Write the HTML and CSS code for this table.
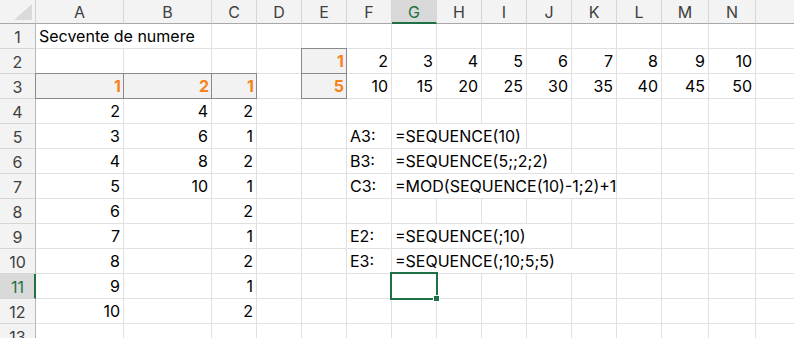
FILE: index.html
```html
<!DOCTYPE html>
<html>
<head>
<meta charset="utf-8">
<link rel="stylesheet" href="styles.css">
</head>
<body>
<div class="sheet">
  <!-- header row: corner + A..O -->
  <div class="corner"><svg class="tri" width="18" height="16" viewBox="0 0 18 16"><polygon points="18,0 18,16 0,16" fill="#dadada"/></svg></div>
  <div class="ch">A</div><div class="ch">B</div><div class="ch">C</div><div class="ch">D</div><div class="ch">E</div><div class="ch">F</div><div class="ch ch-sel">G</div><div class="ch">H</div><div class="ch">I</div><div class="ch">J</div><div class="ch">K</div><div class="ch">L</div><div class="ch">M</div><div class="ch">N</div><div class="ch"></div>

  <!-- row 1: A-B span, C..O (13) -->
  <div class="rh">1</div>
  <div class="c s2 txt">Secvente de numere</div>
  <div class="c"></div><div class="c"></div><div class="c"></div><div class="c"></div><div class="c"></div>
  <div class="c"></div><div class="c"></div><div class="c"></div><div class="c"></div><div class="c"></div>
  <div class="c"></div><div class="c"></div><div class="c"></div>

  <!-- row 2 -->
  <div class="rh">2</div>
  <div class="c"></div><div class="c"></div><div class="c"></div><div class="c"></div>
  <div class="c n spill">1</div>
  <div class="c n">2</div><div class="c n">3</div><div class="c n">4</div><div class="c n">5</div><div class="c n">6</div><div class="c n">7</div><div class="c n">8</div><div class="c n">9</div><div class="c n">10</div><div class="c"></div>

  <!-- row 3 -->
  <div class="rh">3</div>
  <div class="c n spill">1</div><div class="c n spill">2</div><div class="c n spill">1</div><div class="c"></div>
  <div class="c n spill">5</div>
  <div class="c n">10</div><div class="c n">15</div><div class="c n">20</div><div class="c n">25</div><div class="c n">30</div><div class="c n">35</div><div class="c n">40</div><div class="c n">45</div><div class="c n">50</div><div class="c"></div>

  <!-- row 4 -->
  <div class="rh">4</div>
  <div class="c n">2</div><div class="c n">4</div><div class="c n">2</div>
  <div class="c"></div><div class="c"></div><div class="c"></div><div class="c"></div><div class="c"></div><div class="c"></div>
  <div class="c"></div><div class="c"></div><div class="c"></div><div class="c"></div><div class="c"></div><div class="c"></div>

  <!-- row 5: G-I span, then J..O (6) -->
  <div class="rh">5</div>
  <div class="c n">3</div><div class="c n">6</div><div class="c n">1</div><div class="c"></div><div class="c"></div>
  <div class="c txt">A3:</div><div class="c s3 txt">=SEQUENCE(10)</div>
  <div class="c"></div><div class="c"></div><div class="c"></div><div class="c"></div><div class="c"></div><div class="c"></div>

  <!-- row 6: G-J span, then K..O (5) -->
  <div class="rh">6</div>
  <div class="c n">4</div><div class="c n">8</div><div class="c n">2</div><div class="c"></div><div class="c"></div>
  <div class="c txt">B3:</div><div class="c s4 txt">=SEQUENCE(5;;2;2)</div>
  <div class="c"></div><div class="c"></div><div class="c"></div><div class="c"></div><div class="c"></div>

  <!-- row 7: G-K span, then L..O (4) -->
  <div class="rh">7</div>
  <div class="c n">5</div><div class="c n">10</div><div class="c n">1</div><div class="c"></div><div class="c"></div>
  <div class="c txt">C3:</div><div class="c s5 txt">=MOD(SEQUENCE(10)-1;2)+1</div>
  <div class="c"></div><div class="c"></div><div class="c"></div><div class="c"></div>

  <!-- row 8 -->
  <div class="rh">8</div>
  <div class="c n">6</div><div class="c"></div><div class="c n">2</div>
  <div class="c"></div><div class="c"></div><div class="c"></div><div class="c"></div><div class="c"></div><div class="c"></div>
  <div class="c"></div><div class="c"></div><div class="c"></div><div class="c"></div><div class="c"></div><div class="c"></div>

  <!-- row 9: G-J span, then K..O (5) -->
  <div class="rh">9</div>
  <div class="c n">7</div><div class="c"></div><div class="c n">1</div><div class="c"></div><div class="c"></div>
  <div class="c txt">E2:</div><div class="c s4 txt">=SEQUENCE(;10)</div>
  <div class="c"></div><div class="c"></div><div class="c"></div><div class="c"></div><div class="c"></div>

  <!-- row 10: G-K span, then L..O (4) -->
  <div class="rh">10</div>
  <div class="c n">8</div><div class="c"></div><div class="c n">2</div><div class="c"></div><div class="c"></div>
  <div class="c txt">E3:</div><div class="c s5 txt">=SEQUENCE(;10;5;5)</div>
  <div class="c"></div><div class="c"></div><div class="c"></div><div class="c"></div>

  <!-- row 11 -->
  <div class="rh rh-sel">11</div>
  <div class="c n">9</div><div class="c"></div><div class="c n">1</div><div class="c"></div><div class="c"></div><div class="c"></div>
  <div class="c sel"></div>
  <div class="c"></div><div class="c"></div><div class="c"></div><div class="c"></div><div class="c"></div><div class="c"></div><div class="c"></div><div class="c"></div>

  <!-- row 12 -->
  <div class="rh">12</div>
  <div class="c n">10</div><div class="c"></div><div class="c n">2</div>
  <div class="c"></div><div class="c"></div><div class="c"></div><div class="c"></div><div class="c"></div><div class="c"></div>
  <div class="c"></div><div class="c"></div><div class="c"></div><div class="c"></div><div class="c"></div><div class="c"></div>

  <!-- row 13 -->
  <div class="rh">13</div>
  <div class="c"></div><div class="c"></div><div class="c"></div>
  <div class="c"></div><div class="c"></div><div class="c"></div><div class="c"></div><div class="c"></div><div class="c"></div>
  <div class="c"></div><div class="c"></div><div class="c"></div><div class="c"></div><div class="c"></div><div class="c"></div>
</div>
</body>
</html>
```

FILE: styles.css
```css
html, body {
  margin: 0;
  padding: 0;
  background: #ffffff;
  overflow: hidden;
}

.sheet {
  display: grid;
  grid-template-columns: 36px 88px 88px repeat(10, 45px) 47px 47px 80px;
  grid-template-rows: 24px;
  grid-auto-rows: 25px;
  width: 874px;
  font-family: "Inter", "Liberation Sans", sans-serif;
  font-size: 16px;
  color: #000000;
}

.sheet > div {
  box-sizing: border-box;
  min-width: 0;
}

.corner {
  background: #f3f3f3;
  border-right: 1px solid #d0d0d0;
  border-bottom: 1px solid #a8a8a8;
  display: flex;
  align-items: flex-end;
  justify-content: flex-end;
  padding: 0 3px 3px 0;
}

.tri {
  display: block;
}

.ch {
  background: #f3f3f3;
  border-right: 1px solid #d6d6d6;
  border-bottom: 1px solid #a8a8a8;
  color: #404040;
  display: flex;
  align-items: center;
  justify-content: center;
  padding-top: 1px;
}

.ch-sel {
  background: #d9d9d9;
  color: #1f7145;
  border-bottom: 2px solid #1f7145;
}

.rh {
  background: #f3f3f3;
  border-right: 1px solid #b8b8b8;
  border-bottom: 1px solid #d6d6d6;
  color: #404040;
  display: flex;
  align-items: center;
  justify-content: center;
  padding-top: 1px;
}

.rh-sel {
  background: #d9d9d9;
  color: #1f7145;
  border-right: 2px solid #1f7145;
  padding-left: 1px;
}

.c {
  border-right: 1px solid #e1e1e1;
  border-bottom: 1px solid #e1e1e1;
  display: flex;
  align-items: flex-end;
  padding: 0 3px 3px 3px;
  white-space: nowrap;
  line-height: 18px;
}

.n {
  justify-content: flex-end;
}

.txt {
  justify-content: flex-start;
}

.s2 { grid-column: span 2; }
.s3 { grid-column: span 3; }
.s4 { grid-column: span 4; }
.s5 { grid-column: span 5; }

.spill {
  background: #f2f2f2;
  border: 1px solid #8a8a8a;
  margin: -1px 0 0 -1px;
  color: #f7821b;
  font-weight: 700;
  padding-right: 2px;
}

.sel {
  position: relative;
  z-index: 1;
  border: 2px solid #1f7145;
  margin: -2px -1px -1px -2px;
}

.sel::after {
  content: "";
  position: absolute;
  right: -4px;
  bottom: -4px;
  width: 5px;
  height: 5px;
  background: #1f7145;
  border: 1px solid #ffffff;
}
```
